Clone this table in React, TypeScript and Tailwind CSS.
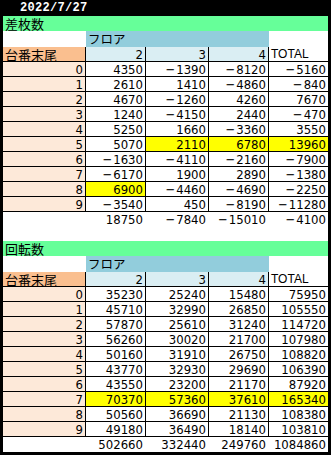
import React from "react";

type Sec = {
  title: string;
  rows: number[][];
  totals: number[];
  hl: (r: number, c: number) => boolean;
};

const sec1: Sec = {
  title: "差枚数",
  rows: [
    [4350, -1390, -8120, -5160],
    [2610, 1410, -4860, -840],
    [4670, -1260, 4260, 7670],
    [1240, -4150, 2440, -470],
    [5250, 1660, -3360, 3550],
    [5070, 2110, 6780, 13960],
    [-1630, -4110, -2160, -7900],
    [-6170, 1900, 2890, -1380],
    [6900, -4460, -4690, -2250],
    [-3540, 450, -8190, -11280],
  ],
  totals: [18750, -7840, -15010, -4100],
  hl: (r, c) => (r === 5 && c >= 1) || (r === 8 && c === 0),
};

const sec2: Sec = {
  title: "回転数",
  rows: [
    [35230, 25240, 15480, 75950],
    [45710, 32990, 26850, 105550],
    [57870, 25610, 31240, 114720],
    [56260, 30020, 21700, 107980],
    [50160, 31910, 26750, 108820],
    [43770, 32930, 29690, 106390],
    [43550, 23200, 21170, 87920],
    [70370, 57360, 37610, 165340],
    [50560, 36690, 21130, 108380],
    [49180, 36490, 18140, 103810],
  ],
  totals: [502660, 332440, 249760, 1084860],
  hl: (r) => r === 7,
};

const cols = "grid grid-cols-[83px_60px_63px_60px_59px]";
const num = "font-['Liberation_Sans_Narrow','DejaVu_Sans_Condensed',sans-serif] text-[13px] leading-none";
const jp = "font-['Noto_Sans_CJK_JP',sans-serif]";

function Num({ v }: { v: number }) {
  if (v < 0) {
    return (
      <span>
        <span className="mr-[1px]">−</span>
        {Math.abs(v)}
      </span>
    );
  }
  return <span>{v}</span>;
}

function Section({ s }: { s: Sec }) {
  return (
    <div className="flex flex-col">
      <div className={`h-[15px] bg-[#66ff99] flex items-center pl-[2px] text-[13px] leading-none text-black ${jp}`}>
        {s.title}
      </div>
      <div className={`${cols} h-[16px]`}>
        <div className="bg-white" />
        <div className={`col-span-3 bg-[#92cddc] flex items-center pl-[2px] text-[12.5px] leading-none ${jp}`}>フロア</div>
        <div className="bg-white" />
      </div>
      <div className={`${cols} h-[15px]`}>
        <div className={`bg-[#fabf8f] border-r border-b border-black flex items-center pl-[2px] text-[13px] leading-none ${jp}`}>台番末尾</div>
        {["2", "3", "4"].map((h) => (
          <div key={h} className={`bg-[#daeef3] border-r border-b border-black flex items-center justify-end pr-[2px] ${num}`}>{h}</div>
        ))}
        <div className="bg-white border-b border-black flex items-center pl-[2px] text-[12px] leading-none font-['Liberation_Sans',sans-serif]">TOTAL</div>
      </div>
      {s.rows.map((row, r) => (
        <div key={r} className={`${cols} h-[15px]`}>
          <div className={`bg-[#fde9d9] border-r border-b border-black flex items-center justify-end pr-[2px] ${num}`}>{r}</div>
          {row.map((v, c) => (
            <div
              key={c}
              className={`${s.hl(r, c) ? "bg-[#ffff00]" : "bg-white"} ${c < 3 ? "border-r" : ""} border-b border-black flex items-center justify-end pr-[2px] ${num}`}
            >
              <Num v={v} />
            </div>
          ))}
        </div>
      ))}
      <div className={`${cols} h-[15px] bg-white`}>
        <div />
        {s.totals.map((v, c) => (
          <div key={c} className={`flex items-center justify-end ${c < 3 ? "pr-[3px]" : "pr-[2px]"} ${num}`}>
            <Num v={v} />
          </div>
        ))}
      </div>
    </div>
  );
}

export default function App() {
  return (
    <div className="w-[331px] h-[455px] bg-black overflow-hidden flex flex-col pl-[3px] pr-[3px] pb-[3px]">
      <div className="h-[17px] -ml-[3px] flex items-center pl-[20px] text-white font-bold text-[12px] leading-none font-['Liberation_Mono',monospace] tracking-[0.3px]">
        2022/7/27
      </div>
      <div className="bg-white flex flex-col flex-1">
        <Section s={sec1} />
        <div className="h-[14px] bg-white" />
        <Section s={sec2} />
      </div>
    </div>
  );
}
